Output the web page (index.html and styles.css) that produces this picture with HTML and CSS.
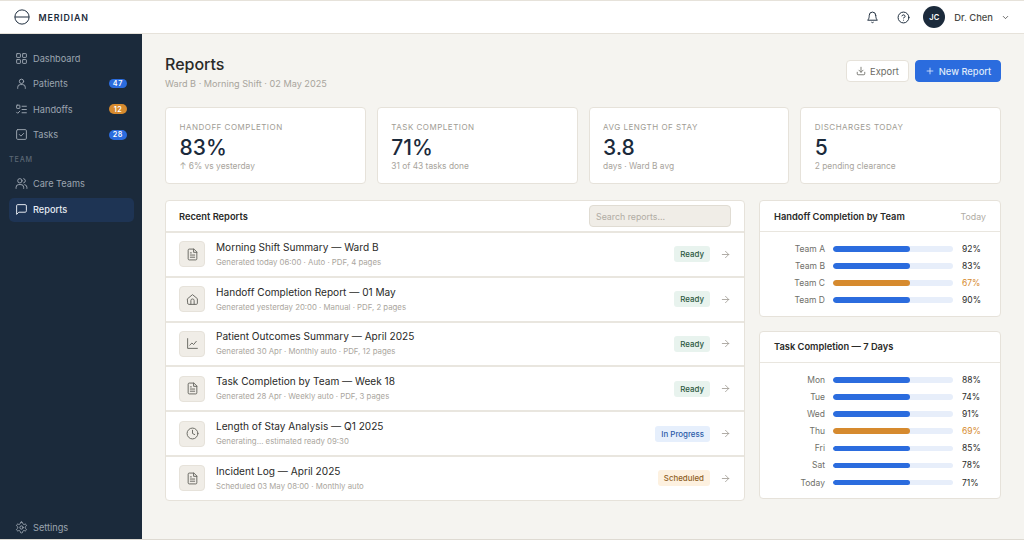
FILE: index.html
```html
<!DOCTYPE html>
<html lang="en">
<head>
<meta charset="utf-8">
<title>Meridian Reports</title>
<link rel="stylesheet" href="styles.css">
</head>
<body>
<svg class="defs" width="0" height="0" aria-hidden="true">
  <defs>
    <symbol id="i-doc" viewBox="0 0 24 24"><path d="M14 2H6a2 2 0 0 0-2 2v16a2 2 0 0 0 2 2h12a2 2 0 0 0 2-2V8z"/><path d="M14 2v6h6"/><path d="M16 13H8M16 17H8M10 9H8"/></symbol>
    <symbol id="i-arrow" viewBox="0 0 24 24"><path d="M5 12h14M12 5l7 7-7 7"/></symbol>
  </defs>
</svg>
<div class="app">
  <header class="topbar">
    <div class="brand">
      <svg class="logo" viewBox="0 0 18 18"><circle cx="9" cy="9" r="8"/><path d="M1 9h16"/></svg>
      <span>MERIDIAN</span>
    </div>
    <div class="top-actions">
      <svg class="ic top-ic" viewBox="0 0 24 24"><path d="M18 8a6 6 0 0 0-12 0c0 7-3 9-3 9h18s-3-2-3-9"/><path d="M13.7 21a2 2 0 0 1-3.4 0"/></svg>
      <svg class="ic top-ic help" viewBox="0 0 24 24"><circle cx="12" cy="12" r="10"/><path d="M9.100 9a3 3 0 0 1 5.800 1c0 2-3 3-3 3"/><path d="M12 17h.01"/></svg>
      <div class="user">
        <span class="avatar">JC</span>
        <span class="uname">Dr. Chen</span>
        <svg class="ic chev" viewBox="0 0 24 24"><path d="M6 9l6 6 6-6"/></svg>
      </div>
    </div>
  </header>
  <div class="body">
    <aside class="sidebar">
      <nav class="nav">
        <a class="nav-item"><svg class="ic" viewBox="0 0 24 24"><rect x="3" y="3" width="7" height="7" rx="1"/><rect x="14" y="3" width="7" height="7" rx="1"/><rect x="3" y="14" width="7" height="7" rx="1"/><rect x="14" y="14" width="7" height="7" rx="1"/></svg>Dashboard</a>
        <a class="nav-item"><svg class="ic" viewBox="0 0 24 24"><circle cx="12" cy="8" r="4"/><path d="M5 21v-2a5 5 0 0 1 5-5h4a5 5 0 0 1 5 5v2"/></svg>Patients<span class="pill blue">47</span></a>
        <a class="nav-item"><svg class="ic" viewBox="0 0 24 24"><rect x="3" y="4" width="6" height="6" rx="1"/><path d="M3 17l2 2 4-4M13 6h8M13 12h8M13 18h8"/></svg>Handoffs<span class="pill amber">12</span></a>
        <a class="nav-item"><svg class="ic" viewBox="0 0 24 24"><rect x="3" y="3" width="18" height="18" rx="2"/><path d="M8 12l3 3 5-5"/></svg>Tasks<span class="pill blue">28</span></a>
        <div class="nav-label">TEAM</div>
        <a class="nav-item"><svg class="ic" viewBox="0 0 24 24"><circle cx="9" cy="7" r="4"/><path d="M2 21v-2a5 5 0 0 1 5-5h4a5 5 0 0 1 5 5v2"/><path d="M16 3.100a4 4 0 0 1 0 7.800M22 21v-2a5 5 0 0 0-4-4.900"/></svg>Care Teams</a>
        <a class="nav-item active"><svg class="ic" viewBox="0 0 24 24"><path d="M21 15a2 2 0 0 1-2 2H7l-4 4V5a2 2 0 0 1 2-2h14a2 2 0 0 1 2 2z"/></svg>Reports</a>
      </nav>
      <a class="nav-item settings"><svg class="ic" viewBox="0 0 24 24"><path d="M12.220 2h-.44a2 2 0 0 0-2 2v.18a2 2 0 0 1-1 1.730l-.43.25a2 2 0 0 1-2 0l-.15-.08a2 2 0 0 0-2.730.73l-.22.38a2 2 0 0 0 .73 2.730l.15.1a2 2 0 0 1 1 1.720v.51a2 2 0 0 1-1 1.740l-.15.09a2 2 0 0 0-.73 2.730l.22.38a2 2 0 0 0 2.730.73l.15-.08a2 2 0 0 1 2 0l.43.25a2 2 0 0 1 1 1.730V20a2 2 0 0 0 2 2h.44a2 2 0 0 0 2-2v-.18a2 2 0 0 1 1-1.730l.43-.25a2 2 0 0 1 2 0l.15.08a2 2 0 0 0 2.730-.73l.22-.39a2 2 0 0 0-.73-2.730l-.15-.08a2 2 0 0 1-1-1.740v-.5a2 2 0 0 1 1-1.740l.15-.09a2 2 0 0 0 .73-2.730l-.22-.38a2 2 0 0 0-2.730-.73l-.15.08a2 2 0 0 1-2 0l-.43-.25a2 2 0 0 1-1-1.730V4a2 2 0 0 0-2-2z"/><circle cx="12" cy="12" r="3"/></svg>Settings</a>
    </aside>
    <main class="main">
      <div class="page-head">
        <div>
          <h1>Reports</h1>
          <p class="sub">Ward B · Morning Shift · 02 May 2025</p>
        </div>
        <div class="head-actions">
          <button class="btn ghost"><svg class="ic" viewBox="0 0 24 24"><path d="M21 15v4a2 2 0 0 1-2 2H5a2 2 0 0 1-2-2v-4M7 10l5 5 5-5M12 15V3"/></svg>Export</button>
          <button class="btn primary"><svg class="ic" viewBox="0 0 24 24"><path d="M12 5v14M5 12h14"/></svg>New Report</button>
        </div>
      </div>
      <section class="stats">
        <div class="stat"><div class="stat-label">HANDOFF COMPLETION</div><div class="stat-value">83%</div><div class="stat-note">↑ 6% vs yesterday</div></div>
        <div class="stat"><div class="stat-label">TASK COMPLETION</div><div class="stat-value">71%</div><div class="stat-note">31 of 43 tasks done</div></div>
        <div class="stat"><div class="stat-label">AVG LENGTH OF STAY</div><div class="stat-value">3.8</div><div class="stat-note">days · Ward B avg</div></div>
        <div class="stat"><div class="stat-label">DISCHARGES TODAY</div><div class="stat-value">5</div><div class="stat-note">2 pending clearance</div></div>
      </section>
      <section class="columns">
        <div class="card reports">
          <div class="card-head reports-head">
            <h2>Recent Reports</h2>
            <div class="search">Search reports...</div>
          </div>
          <div class="row">
            <span class="thumb"><svg class="ic"><use href="#i-doc"/></svg></span>
            <div class="row-text"><div class="row-title">Morning Shift Summary — Ward B</div><div class="row-meta">Generated today 06:00 · Auto · PDF, 4 pages</div></div>
            <span class="tag ready">Ready</span><svg class="ic arrow"><use href="#i-arrow"/></svg>
          </div>
          <div class="row">
            <span class="thumb"><svg class="ic" viewBox="0 0 24 24"><path d="M3 10.500 12 3l9 7.500V19a2 2 0 0 1-2 2H5a2 2 0 0 1-2-2z"/><path d="M9 21v-7a3 3 0 0 1 6 0v7"/></svg></span>
            <div class="row-text"><div class="row-title">Handoff Completion Report — 01 May</div><div class="row-meta">Generated yesterday 20:00 · Manual · PDF, 2 pages</div></div>
            <span class="tag ready">Ready</span><svg class="ic arrow"><use href="#i-arrow"/></svg>
          </div>
          <div class="row">
            <span class="thumb"><svg class="ic" viewBox="0 0 24 24"><path d="M3 3v18h18"/><path d="M7 15l4-4 3 3 5-6"/></svg></span>
            <div class="row-text"><div class="row-title">Patient Outcomes Summary — April 2025</div><div class="row-meta">Generated 30 Apr · Monthly auto · PDF, 12 pages</div></div>
            <span class="tag ready">Ready</span><svg class="ic arrow"><use href="#i-arrow"/></svg>
          </div>
          <div class="row">
            <span class="thumb"><svg class="ic"><use href="#i-doc"/></svg></span>
            <div class="row-text"><div class="row-title">Task Completion by Team — Week 18</div><div class="row-meta">Generated 28 Apr · Weekly auto · PDF, 3 pages</div></div>
            <span class="tag ready">Ready</span><svg class="ic arrow"><use href="#i-arrow"/></svg>
          </div>
          <div class="row">
            <span class="thumb"><svg class="ic" viewBox="0 0 24 24"><circle cx="12" cy="12" r="10"/><path d="M12 6v6l4 2"/></svg></span>
            <div class="row-text"><div class="row-title">Length of Stay Analysis — Q1 2025</div><div class="row-meta">Generating... estimated ready 09:30</div></div>
            <span class="tag progress">In Progress</span><svg class="ic arrow"><use href="#i-arrow"/></svg>
          </div>
          <div class="row">
            <span class="thumb"><svg class="ic"><use href="#i-doc"/></svg></span>
            <div class="row-text"><div class="row-title">Incident Log — April 2025</div><div class="row-meta">Scheduled 03 May 08:00 · Monthly auto</div></div>
            <span class="tag scheduled">Scheduled</span><svg class="ic arrow"><use href="#i-arrow"/></svg>
          </div>
        </div>
        <div class="side">
          <div class="card">
            <div class="card-head side-head"><h2>Handoff Completion by Team</h2><span class="when">Today</span></div>
            <div class="bars">
              <div class="bar-row"><span class="bar-name">Team A</span><span class="track"><span class="fill"></span></span><span class="bar-val">92%</span></div>
              <div class="bar-row"><span class="bar-name">Team B</span><span class="track"><span class="fill"></span></span><span class="bar-val">83%</span></div>
              <div class="bar-row warn"><span class="bar-name">Team C</span><span class="track"><span class="fill"></span></span><span class="bar-val">67%</span></div>
              <div class="bar-row"><span class="bar-name">Team D</span><span class="track"><span class="fill"></span></span><span class="bar-val">90%</span></div>
            </div>
          </div>
          <div class="card">
            <div class="card-head side-head"><h2>Task Completion — 7 Days</h2></div>
            <div class="bars">
              <div class="bar-row"><span class="bar-name">Mon</span><span class="track"><span class="fill"></span></span><span class="bar-val">88%</span></div>
              <div class="bar-row"><span class="bar-name">Tue</span><span class="track"><span class="fill"></span></span><span class="bar-val">74%</span></div>
              <div class="bar-row"><span class="bar-name">Wed</span><span class="track"><span class="fill"></span></span><span class="bar-val">91%</span></div>
              <div class="bar-row warn"><span class="bar-name">Thu</span><span class="track"><span class="fill"></span></span><span class="bar-val">69%</span></div>
              <div class="bar-row"><span class="bar-name">Fri</span><span class="track"><span class="fill"></span></span><span class="bar-val">85%</span></div>
              <div class="bar-row"><span class="bar-name">Sat</span><span class="track"><span class="fill"></span></span><span class="bar-val">78%</span></div>
              <div class="bar-row"><span class="bar-name">Today</span><span class="track"><span class="fill"></span></span><span class="bar-val">71%</span></div>
            </div>
          </div>
        </div>
      </section>
    </main>
  </div>
</div>
</body>
</html>
```
FILE: styles.css
```css
* { box-sizing: border-box; }
html, body { margin: 0; height: 100%; overflow: hidden; }
body { font-family: Inter, "Liberation Sans", sans-serif; color: #2a2a28; background: #f5f4f0; }
.defs { position: absolute; }
.app { height: 540px; display: flex; flex-direction: column; border-top: 1px solid #e6e2da; border-bottom: 1px solid #dedad2; }
.ic { width: 13px; height: 13px; fill: none; stroke: currentColor; stroke-width: 1.8; stroke-linecap: round; stroke-linejoin: round; flex: none; }

.topbar { height: 33px; flex: none; background: #fff; display: flex; align-items: center; justify-content: space-between; padding: 0 14px; border-bottom: 1px solid #e6e2da; }
.brand { display: flex; align-items: center; gap: 8.5px; font-size: 8.8px; font-weight: 600; letter-spacing: .85px; color: #1b2a3b; }
.logo { width: 16px; height: 16px; fill: none; stroke: #1b2a3b; stroke-width: 1.1; }
.top-actions { display: flex; align-items: center; gap: 18px; color: #1b2a3b; }
.help { margin-right: -4.5px; }
.user { display: flex; align-items: center; gap: 9px; }
.avatar { width: 22px; height: 22px; border-radius: 50%; background: #1b2a3b; color: #fff; font-size: 7.5px; font-weight: 600; display: flex; align-items: center; justify-content: center; }
.uname { font-size: 9.4px; color: #4a4a46; font-weight: 500; }
.chev { width: 9px; height: 9px; color: #2a2a28; margin-left: -1px; }

.body { flex: 1; display: flex; min-height: 0; }
.sidebar { width: 142px; flex: none; background: #1b2a3b; display: flex; flex-direction: column; justify-content: space-between; padding: 12px 8px 0 9px; }
.nav { display: flex; flex-direction: column; gap: 1.6px; }
.nav-item { height: 24px; display: flex; align-items: center; gap: 5px; padding: 0 7px 0 6px; border-radius: 5px; font-size: 9.2px; color: #9ba5b0; }
.nav-item.active { background: #1e3454; color: #e8edf3; font-weight: 500; }
.nav-label { font-size: 7.2px; font-weight: 500; letter-spacing: .8px; color: #5c6875; padding: 7px 0 6px; }
.pill { margin-left: auto; height: 9.6px; min-width: 18px; padding: 0 4px; border-radius: 5px; color: #fff; font-size: 7.2px; font-weight: 600; letter-spacing: .6px; display: flex; align-items: center; justify-content: center; }
.pill.blue { background: #2b6cde; }
.pill.amber { background: #d68a2e; }

.main { flex: 1; min-width: 0; padding: 19px 23px 0; display: flex; flex-direction: column; }
.page-head { display: flex; justify-content: space-between; align-items: flex-start; height: 54px; }
h1 { margin: 0; font-size: 16px; font-weight: 500; line-height: 22px; color: #2a2a28; }
.sub { margin: 2px 0 0; font-size: 9.15px; line-height: 13px; color: #a8a49c; }
.head-actions { display: flex; gap: 6px; padding-top: 7px; }
.btn { height: 22px; border-radius: 4px; display: flex; align-items: center; gap: 4px; font-family: inherit; font-size: 9.4px; padding: 0; justify-content: center; }
.btn .ic { width: 10px; height: 10px; stroke-width: 2; }
.btn.ghost { width: 63px; background: #fff; border: 1px solid #e6e2da; color: #6a6a64; }
.btn.primary { width: 86px; background: #2b6cde; border: 1px solid #2b6cde; color: #dfe9fa; font-weight: 500; }

.stats { display: grid; grid-template-columns: repeat(4, 1fr); gap: 11px; }
.stat { height: 77px; background: #fff; border: 1px solid #e6e2da; border-radius: 4px; padding: 14px 13.5px 0; }
.stat-label { font-size: 8px; line-height: 10px; letter-spacing: .5px; color: #a09c94; font-weight: 400; }
.stat-value { font-size: 21px; line-height: 25px; font-weight: 500; color: #1b2a3b; margin-top: 3px; }
.stat-note { font-size: 8.4px; line-height: 11px; color: #a8a49c; margin-top: 1px; }

.columns { display: grid; grid-template-columns: 580px 242px; gap: 14px; margin-top: 16px; align-items: start; }
.card { background: #fff; border: 1px solid #e6e2da; border-radius: 4px; overflow: hidden; }
.card-head { display: flex; align-items: center; justify-content: space-between; }
h2 { margin: 0; font-size: 9.3px; font-weight: 600; color: #2a2a28; }
.reports-head { height: 30px; padding: 0 13px; }
.search { width: 142px; height: 22px; background: #f0ede7; border: 1px solid #e0dcd3; border-radius: 4px; font-size: 8.8px; color: #b0aca4; display: flex; align-items: center; padding: 0 6px; }
.row { height: 44.8px; border-top: 2px solid #e9e6df; display: flex; align-items: center; padding: 0 13px; }
.thumb { width: 26px; height: 26px; background: #f0ede7; border: 1px solid #e6e2da; border-radius: 4px; display: flex; align-items: center; justify-content: center; color: #6a6a64; margin-right: 11px; }
.row-text { flex: 1; min-width: 0; }
.row-title { font-size: 10.1px; line-height: 13px; color: #2a2a28; }
.row-meta { font-size: 7.8px; line-height: 11px; margin-top: 3px; color: #aaa69e; }
.tag { height: 16px; border-radius: 3px; padding: 0 6px; font-size: 7.9px; font-weight: 500; display: flex; align-items: center; }
.tag.ready { background: #e8f3ee; color: #2d5a42; }
.tag.progress { background: #e6effc; color: #2a5aa8; }
.tag.scheduled { background: #fdf1e0; color: #8f5f1e; }
.arrow { width: 11px; height: 11px; color: #a09c94; margin-left: 10px; }

.side { display: flex; flex-direction: column; gap: 14px; }
.side-head { height: 31px; padding: 0 14px; border-bottom: 1px solid #e9e6df; }
.when { font-size: 8.8px; color: #b0aca4; }
.bars { padding: 11.5px 14px 10.2px; display: flex; flex-direction: column; gap: 6.1px; }
.bar-row { height: 11px; display: flex; align-items: center; }
.bar-name { width: 51px; margin-right: 8px; font-size: 8.5px; color: #6f6f69; text-align: right; flex: none; }
.track { width: 120px; height: 5.6px; background: #e7eefa; border-radius: 3px; overflow: hidden; flex: none; display: block; }
.fill { display: block; height: 100%; width: 77px; background: #2b6cde; border-radius: 3px; }
.warn .fill { background: #d68a2e; }
.bar-val { margin-left: 9px; font-size: 8.5px; color: #2a2a28; }
.warn .bar-val { color: #d68a2e; }
```
